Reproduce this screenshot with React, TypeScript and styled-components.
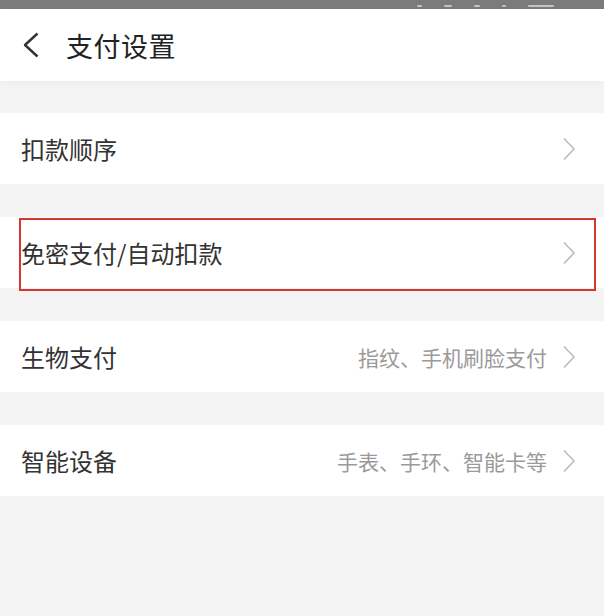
import React from 'react';
import styled, { createGlobalStyle } from 'styled-components';

const GlobalStyle = createGlobalStyle`
  html, body {
    margin: 0;
    padding: 0;
    background: #f4f4f4;
  }
  body {
    font-family: "Noto Sans CJK SC", "Noto Sans", sans-serif;
  }
`;

const Screen = styled.div`
  width: 604px;
  min-height: 616px;
  background: #f4f4f4;
  display: flex;
  flex-direction: column;
  overflow: hidden;
`;

const StatusBar = styled.div`
  height: 9px;
  background: #7b7b7b;
  display: flex;
  justify-content: flex-end;
  align-items: flex-end;
  gap: 22px;
  padding-right: 50px;
`;

const StatusMark = styled.span<{ $w: number }>`
  width: ${(p) => p.$w}px;
  height: 2px;
  margin-bottom: 2px;
  background: rgba(255, 255, 255, 0.55);
  border-radius: 1px;
`;

const Header = styled.header`
  height: 72px;
  background: #fff;
  display: flex;
  align-items: center;
  gap: 24px;
  padding-left: 22px;
  box-shadow: 0 3px 8px rgba(0, 0, 0, 0.03);
  position: relative;
  z-index: 1;
`;

const BackButton = styled.button`
  border: none;
  background: none;
  padding: 0;
  width: 20px;
  height: 28px;
  display: flex;
  align-items: center;
  cursor: pointer;
`;

const Title = styled.h1`
  margin: 0;
  font-size: 27px;
  font-weight: 400;
  color: #222;
  letter-spacing: 0.5px;
`;

const List = styled.div`
  display: flex;
  flex-direction: column;
  gap: 33px;
  padding-top: 32px;
`;

const Row = styled.div<{ $highlight?: boolean }>`
  position: relative;
  height: 71px;
  background: #fff;
  display: flex;
  align-items: center;
  padding: 0 28px 0 21px;

  ${(p) =>
    p.$highlight &&
    `
    &::after {
      content: '';
      position: absolute;
      top: 1px;
      left: 19px;
      right: 8px;
      bottom: -3px;
      border: 2px solid #d8352d;
      pointer-events: none;
    }
  `}
`;

const Label = styled.span`
  flex: 1;
  font-size: 24px;
  color: #333;
`;

const Hint = styled.span`
  font-size: 21px;
  color: #9a9a9a;
  margin-right: 15px;
`;

const Chevron = () => (
  <svg width="14" height="24" viewBox="0 0 14 24">
    <path d="M2 1.5 L12 12 L2 22.5" fill="none" stroke="#bdbdbd" strokeWidth="1.7" strokeLinejoin="round" />
  </svg>
);

const items = [
  { label: '扣款顺序' },
  { label: '免密支付/自动扣款', highlight: true },
  { label: '生物支付', hint: '指纹、手机刷脸支付' },
  { label: '智能设备', hint: '手表、手环、智能卡等' },
];

export default function App() {
  return (
    <Screen>
      <GlobalStyle />
      <StatusBar>
        <StatusMark $w={5} />
        <StatusMark $w={8} />
        <StatusMark $w={6} />
        <StatusMark $w={4} />
        <StatusMark $w={26} />
      </StatusBar>
      <Header>
        <BackButton aria-label="返回">
          <svg width="18" height="26" viewBox="0 0 18 26">
            <path d="M15.5 1.5 L3 13 L15.5 24.5" fill="none" stroke="#333" strokeWidth="2.4" strokeLinejoin="round" />
          </svg>
        </BackButton>
        <Title>支付设置</Title>
      </Header>
      <List>
        {items.map((item) => (
          <Row key={item.label} $highlight={item.highlight}>
            <Label>{item.label}</Label>
            {item.hint && <Hint>{item.hint}</Hint>}
            <Chevron />
          </Row>
        ))}
      </List>
    </Screen>
  );
}
